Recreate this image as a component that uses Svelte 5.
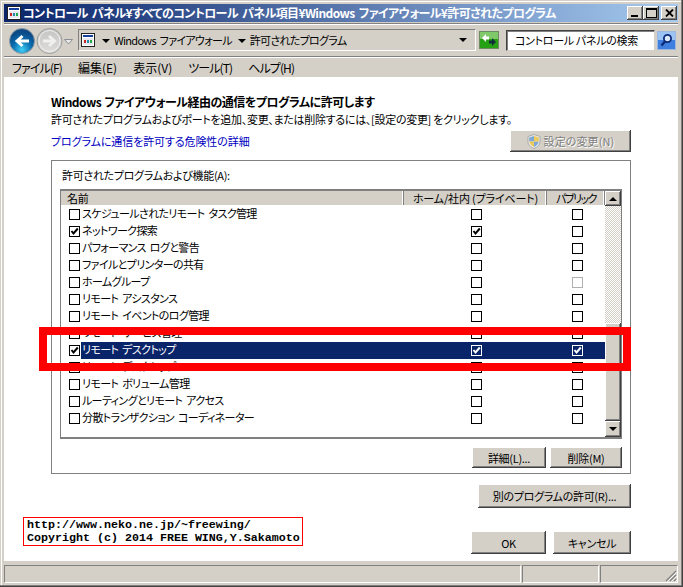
<script>
  const rows = [
    { name: 'スケジュールされたリモート タスク管理', on: false, home: false, pub: false },
    { name: 'ネットワーク探索', on: true, home: true, pub: false },
    { name: 'パフォーマンス ログと警告', on: false, home: false, pub: false },
    { name: 'ファイルとプリンターの共有', on: false, home: false, pub: false },
    { name: 'ホームグループ', on: false, home: false, pub: false, pubOff: true },
    { name: 'リモート アシスタンス', on: false, home: false, pub: false },
    { name: 'リモート イベントのログ管理', on: false, home: false, pub: false },
    { name: 'リモート サービス管理', on: false, home: false, pub: false },
    { name: 'リモート デスクトップ', on: true, home: true, pub: true, selected: true },
    { name: 'リモート デスクトップ - RemoteFX', on: false, home: false, pub: false },
    { name: 'リモート ボリューム管理', on: false, home: false, pub: false },
    { name: 'ルーティングとリモート アクセス', on: false, home: false, pub: false },
    { name: '分散トランザクション コーディネーター', on: false, home: false, pub: false }
  ];
  const menus = [
    { label: 'ファイル(F)', kana: true },
    { label: '編集(E)', kana: false },
    { label: '表示(V)', kana: false },
    { label: 'ツール(T)', kana: true },
    { label: 'ヘルプ(H)', kana: true }
  ];
</script>

{#snippet appIcon()}
  <svg class="app-icon" width="14" height="14" viewBox="0 0 14 14">
    <rect x="0.5" y="0.5" width="13" height="13" fill="#fff" stroke="#222" />
    <rect x="2" y="2" width="10" height="2" fill="#1b3f9c" />
    <rect x="2" y="5" width="10" height="7" fill="#e8e8f0" />
    <rect x="3" y="7" width="2" height="3" fill="#c22" />
    <rect x="6" y="7" width="2" height="3" fill="#28a" />
    <rect x="9" y="7" width="2" height="3" fill="#2a4" />
  </svg>
{/snippet}

{#snippet check(checked, cls)}
  <span class="box {cls}">
    {#if checked}
      <svg width="9" height="9" viewBox="0 0 9 9"><path d="M1.5 4 L3.5 6.5 L7.8 1.5" fill="none" stroke="currentColor" stroke-width="2" /></svg>
    {/if}
  </span>
{/snippet}

<div class="window">
  <div class="titlebar">
    {@render appIcon()}
    <span class="title">コントロール パネル¥すべてのコントロール パネル項目¥Windows ファイアウォール¥許可されたプログラム</span>
    <div class="caption-btns">
      <button class="cap"><span class="min"></span></button>
      <button class="cap"><span class="max"></span></button>
      <button class="cap close">
        <svg width="9" height="8" viewBox="0 0 9 8"><path d="M1 0.5 L8 7.5 M8 0.5 L1 7.5" stroke="#000" stroke-width="1.8" /></svg>
      </button>
    </div>
  </div>

  <div class="toolbar">
    <svg class="nav" width="71" height="28" viewBox="0 0 71 28">
      <defs>
        <radialGradient id="blue" cx="50%" cy="85%" r="70%">
          <stop offset="0" stop-color="#3fd0f5" />
          <stop offset="0.55" stop-color="#0a6cb0" />
          <stop offset="1" stop-color="#0b4a86" />
        </radialGradient>
        <linearGradient id="grey" x1="0" y1="0" x2="0" y2="1">
          <stop offset="0" stop-color="#c4c4c2" />
          <stop offset="1" stop-color="#dedddb" />
        </linearGradient>
      </defs>
      <circle cx="40.5" cy="14" r="12.5" fill="url(#grey)" stroke="#9d9d9b" />
      <circle cx="40.5" cy="14" r="10.5" fill="none" stroke="#efefed" />
      <path d="M34 14 H45 M40 9 L45.5 14 L40 19" fill="none" stroke="#f0f0ee" stroke-width="3" />
      <circle cx="13" cy="14" r="12.5" fill="url(#blue)" stroke="#8e9aa3" />
      <path d="M20 14 H9 M13.5 9 L8 14 L13.5 19" fill="none" stroke="#fff" stroke-width="3" />
      <path d="M55.5 12.5 H63.5 L59.5 17 Z" fill="#e8e8e6" stroke="#8b8f94" />
    </svg>
    <div class="address">
      {@render appIcon()}
      <span class="tri"></span>
      <span class="crumb">Windows ファイアウォール</span>
      <span class="tri"></span>
      <span class="crumb">許可されたプログラム</span>
      <span class="tri drop"></span>
    </div>
    <svg class="refresh" width="20" height="18" viewBox="0 0 20 18">
      <rect x="0.5" y="0.5" width="19" height="17" fill="#26a014" stroke="#6d8a62" />
      <rect x="1" y="1" width="18" height="7" fill="#7fc96a" />
      <path d="M3 7 L7 3 V5.5 H10 V8.5 H7 V11 Z" fill="#fff" />
      <path d="M17 11 L13 15 V12.5 H10 V9.5 H13 V7 Z" fill="#10303a" />
    </svg>
    <div class="search">コントロール パネルの検索</div>
    <svg class="search-btn" width="19" height="19" viewBox="0 0 19 19">
      <rect x="0.5" y="0.5" width="18" height="18" fill="#3f7fe0" stroke="#9db8dc" />
      <rect x="1" y="1" width="17" height="8" fill="#9cc4f3" />
      <circle cx="10.5" cy="7.5" r="3.6" fill="#dceaf8" stroke="#0c2a78" stroke-width="1.8" />
      <path d="M8 10.5 L4.5 14.5" stroke="#0c2a78" stroke-width="2.4" />
    </svg>
  </div>

  <nav class="menubar">
    {#each menus as m}
      <span class:kana={m.kana}>{m.label}</span>
    {/each}
  </nav>

  <main class="content">
    <h1>Windows ファイアウォール経由の通信をプログラムに許可します</h1>
    <p class="desc">許可されたプログラムおよびポートを追加、変更、または削除するには、[設定の変更] をクリックします。</p>
    <div class="link-row">
      <span class="link">プログラムに通信を許可する危険性の詳細</span>
      <button class="btn settings" disabled>
        <svg width="14" height="15" viewBox="0 0 14 15">
          <path d="M7 0.5 L13 2.5 V8 C13 11 10 13.3 7 14.5 C4 13.3 1 11 1 8 V2.5 Z" fill="#eee" stroke="#a9a9a6" />
          <path d="M7 2 V7.5 H2.2 V3.4 Z" fill="#7fa8d8" />
          <path d="M7 7.5 H11.8 C11.5 10 9.4 11.9 7 13 Z" fill="#7fa8d8" />
          <path d="M7 2 L11.8 3.4 V7.5 H7 Z" fill="#eccb5c" />
          <path d="M7 7.5 V13 C4.6 11.9 2.5 10 2.2 7.5 Z" fill="#eccb5c" />
        </svg>
        設定の変更(N)
      </button>
    </div>

    <section class="group">
      <div class="group-label">許可されたプログラムおよび機能(A):</div>
      <div class="list">
        <div class="list-main">
          <div class="head">
            <span class="col-name">名前</span>
            <span class="col-home">ホーム/社内 (プライベート)</span>
            <span class="col-pub">パブリック</span>
          </div>
          {#each rows as r}
            <div class="row">
              <span class="cell-name">
                {@render check(r.on, '')}
                <span class="name" class:sel={r.selected}>{r.name}</span>
              </span>
              <span class="cell-check cell-home" class:sel={r.selected}>{@render check(r.home, r.selected ? 'inv' : '')}</span>
              <span class="cell-check cell-pub" class:sel={r.selected}>{@render check(r.pub, r.selected ? 'inv' : r.pubOff ? 'off' : '')}</span>
            </div>
          {/each}
        </div>
        <div class="scroll">
          <div class="sb-btn first"><span class="up"></span></div>
          <div class="track top"></div>
          <div class="thumb"></div>
          <div class="sb-btn"><span class="down"></span></div>
        </div>
      </div>
      <div class="group-actions">
        <button class="btn details">詳細(L)...</button>
        <button class="btn remove">削除(M)</button>
      </div>
    </section>

    <div class="other-row">
      <button class="btn other">別のプログラムの許可(R)...</button>
    </div>

    <div class="foot">
      <div class="copyright">http://www.neko.ne.jp/~freewing/<br />Copyright (c) 2014 FREE WING,Y.Sakamoto</div>
      <div class="foot-btns">
        <button class="btn ok">OK</button>
        <button class="btn cancel">キャンセル</button>
      </div>
    </div>

    <div class="highlight"></div>
  </main>

  <footer class="status">
    <div class="pane p1"></div>
    <div class="pane p2"></div>
    <div class="pane p3">
      <svg class="grip" width="12" height="12" viewBox="0 0 12 12">
        <path d="M11 1 L1 11 M11 5 L5 11 M11 9 L9 11" stroke="#808080" stroke-width="1.2" />
        <path d="M12 2 L2 12 M12 6 L6 12 M12 10 L10 12" stroke="#fff" stroke-width="0.8" />
      </svg>
    </div>
  </footer>
</div>

<style>
  :global(body) {
    margin: 0;
    background: #d4d0c8;
  }

  .window {
    width: 683px;
    height: 587px;
    box-sizing: border-box;
    padding: 4px 5px 4px 4px;
    background: #d4d0c8;
    display: flex;
    flex-direction: column;
    position: relative;
    box-shadow: inset -1px -1px 0 #404040, inset -2px -2px 0 #808080, inset 1px 1px 0 #d4d0c8, inset 2px 2px 0 #fff;
    font-family: "Noto Sans CJK JP", "Liberation Sans", sans-serif;
    font-size: 11px;
    letter-spacing: -0.3px;
    font-feature-settings: "palt";
    color: #000;
    overflow: hidden;
  }

  .titlebar {
    height: 18px;
    flex-shrink: 0;
    display: flex;
    align-items: center;
    padding-left: 3px;
    gap: 1px;
    background: linear-gradient(90deg, #0a246a, #a6caf0);
    color: #fff;
  }

  .app-icon { flex-shrink: 0; }

  .title {
    font-size: 12px;
    font-weight: 700;
    letter-spacing: -0.6px;
    word-spacing: 2px;
    white-space: nowrap;
    line-height: 18px;
    padding-left: 1px;
    flex: 1;
  }

  .caption-btns {
    display: flex;
    margin-right: 1px;
  }

  .cap {
    width: 16px;
    height: 14px;
    padding: 0;
    border: 0;
    background: #d4d0c8;
    box-shadow: inset -1px -1px 0 #404040, inset 1px 1px 0 #fff, inset -2px -2px 0 #808080;
    display: flex;
    align-items: center;
    justify-content: center;
    position: relative;
  }

  .cap.close { margin-left: 2px; }

  .min {
    width: 7px;
    height: 2px;
    background: #000;
    margin-top: 6px;
    margin-right: 2px;
  }

  .max {
    width: 9px;
    height: 7px;
    border: 1px solid #000;
    border-top-width: 2px;
    box-sizing: content-box;
    margin-top: -1px;
  }

  .toolbar {
    height: 34px;
    flex-shrink: 0;
    margin-top: 1px;
    display: flex;
    align-items: center;
    border-top: 1px solid #808080;
    border-bottom: 1px solid #808080;
    box-shadow: inset 0 1px 0 #fff, 0 1px 0 #fff;
    padding-left: 5px;
    box-sizing: border-box;
  }

  .nav { flex-shrink: 0; margin-top: 2px; }

  .address {
    width: 398px;
    height: 22px;
    box-sizing: border-box;
    margin-left: -2px;
    display: flex;
    align-items: center;
    padding-left: 2px;
    border-top: 1px solid #808080;
    border-left: 1px solid #808080;
    border-bottom: 1px solid #fff;
    border-right: 1px solid #fff;
    position: relative;
    font-size: 11px;
  }

  .tri {
    width: 0;
    height: 0;
    border-left: 4px solid transparent;
    border-right: 4px solid transparent;
    border-top: 4px solid #000;
    margin: 1px 4px 0 6px;
  }

  .tri:first-of-type { margin-left: 7px; }

  .tri.drop {
    position: absolute;
    right: 8px;
    top: 8px;
    margin: 0;
  }

  .crumb {
    white-space: nowrap;
    letter-spacing: -0.7px;
    word-spacing: 2px;
  }

  .refresh { margin-left: 3px; flex-shrink: 0; }

  .search {
    width: 149px;
    height: 21px;
    box-sizing: border-box;
    margin-left: 7px;
    padding-left: 8px;
    background: #fff;
    line-height: 19px;
    border-top: 1px solid #404040;
    border-left: 1px solid #404040;
    border-right: 1px solid #d4d0c8;
    border-bottom: 1px solid #d4d0c8;
    box-shadow: inset 1px 1px 0 #808080;
    white-space: nowrap;
  }

  .search-btn { margin-left: 2px; flex-shrink: 0; }

  .menubar {
    height: 19px;
    flex-shrink: 0;
    margin-top: 1px;
    display: flex;
    align-items: center;
    gap: 16px;
    padding-left: 8px;
    line-height: 19px;
    white-space: nowrap;
    font-size: 12px;
    letter-spacing: 0;
  }

  .kana { letter-spacing: -0.9px; }

  .content {
    flex: 1;
    min-height: 0;
    background: #fff;
    padding: 16px 47px 0;
    position: relative;
    display: flex;
    flex-direction: column;
  }

  h1 {
    margin: 0;
    font-size: 12px;
    font-weight: 700;
    letter-spacing: -0.5px;
    word-spacing: 1px;
    line-height: 18px;
    white-space: nowrap;
  }

  .desc {
    margin: 0;
    line-height: 17px;
    white-space: nowrap;
  }

  .link-row {
    display: flex;
    justify-content: space-between;
    align-items: flex-start;
    margin-top: 2px;
  }

  .link {
    color: #0000c0;
    letter-spacing: -0.1px;
    line-height: 17px;
    margin-top: 3px;
  }

  .btn {
    font: inherit;
    font-feature-settings: inherit;
    letter-spacing: inherit;
    padding: 0;
    border: 0;
    background: #d4d0c8;
    color: #000;
    box-shadow: inset -1px -1px 0 #404040, inset 1px 1px 0 #fff, inset -2px -2px 0 #808080;
    display: flex;
    align-items: center;
    justify-content: center;
    box-sizing: border-box;
    white-space: nowrap;
  }

  .settings {
    width: 121px;
    height: 22px;
    gap: 3px;
    letter-spacing: 0.1px;
    color: #808080;
    text-shadow: 1px 1px 0 #fff;
  }

  .group {
    margin-top: 8px;
    height: 314px;
    box-sizing: border-box;
    border: 1px solid #808080;
    padding: 0 8px;
    display: flex;
    flex-direction: column;
  }

  .group-label {
    height: 28px;
    line-height: 28px;
    padding-left: 2px;
    white-space: nowrap;
  }

  .list {
    height: 250px;
    box-sizing: border-box;
    border: 1px solid #808080;
    border-top-width: 2px;
    border-bottom-width: 2px;
    display: flex;
    flex-shrink: 0;
  }

  .list-main {
    flex: 1;
    min-width: 0;
  }

  .head {
    height: 14px;
    display: grid;
    grid-template-columns: 343px 143px 1fr;
    background: #d4d0c8;
    line-height: 14px;
    border-bottom: 1px solid #fff;
    letter-spacing: -0.15px;
  }

  .head span {
    box-shadow: inset -1px 0 0 #808080, inset -2px 0 0 #fff;
    text-align: center;
    white-space: nowrap;
  }

  .head .col-name {
    text-align: left;
    padding-left: 6px;
  }

  .head .col-pub { letter-spacing: -1.5px; }

  .row {
    height: 17px;
    display: grid;
    grid-template-columns: 343px 143px 1fr;
    line-height: 17px;
  }

  .cell-name {
    display: flex;
    align-items: center;
    padding-left: 8px;
  }

  .name {
    flex: 1;
    margin-left: 1px;
    padding-left: 1px;
    padding-bottom: 2px;
    line-height: 15px;
    letter-spacing: -0.62px;
    word-spacing: 2px;
    white-space: nowrap;
  }

  .sel {
    background: #0a246a;
    color: #fff;
  }

  .cell-check {
    display: flex;
    align-items: center;
    justify-content: center;
  }

  .cell-home { padding-left: 2px; }
  .cell-pub { padding-left: 3px; }

  .box {
    width: 11px;
    height: 11px;
    box-sizing: border-box;
    border: 1px solid #000;
    background: #fff;
    color: #000;
    display: flex;
    align-items: center;
    justify-content: center;
    flex-shrink: 0;
  }

  .box.inv {
    background: #0a246a;
    border-color: #fff;
    color: #fff;
  }

  .box.off { border-color: #b0b0b0; }

  .scroll {
    width: 16px;
    display: flex;
    flex-direction: column;
    flex-shrink: 0;
  }

  .sb-btn {
    height: 16px;
    flex-shrink: 0;
    background: #d4d0c8;
    box-shadow: inset -1px -1px 0 #404040, inset 1px 1px 0 #fff, inset -2px -2px 0 #808080;
    display: flex;
    align-items: center;
    justify-content: center;
  }

  .sb-btn.first { height: 15px; }

  .up, .down {
    width: 0;
    height: 0;
    border-left: 4px solid transparent;
    border-right: 4px solid transparent;
  }

  .up { border-bottom: 4px solid #000; }
  .down { border-top: 4px solid #000; }

  .track {
    height: 117px;
    flex-shrink: 0;
    background: conic-gradient(#fff 25%, #d4d0c8 0 50%, #fff 0 75%, #d4d0c8 0) 0 0 / 2px 2px;
  }

  .thumb {
    flex: 1;
    background: #d4d0c8;
    box-shadow: inset -1px -1px 0 #404040, inset 1px 1px 0 #fff, inset -2px -2px 0 #808080;
  }

  .group-actions {
    display: flex;
    justify-content: flex-end;
    gap: 4px;
    margin-top: 8px;
  }

  .details { width: 74px; height: 21px; }
  .remove { width: 72px; height: 21px; }

  .other-row {
    display: flex;
    justify-content: flex-end;
    margin-top: 10px;
  }

  .other { width: 153px; height: 24px; }

  .foot {
    display: flex;
    justify-content: space-between;
    align-items: flex-start;
    margin-left: -28px;
    margin-top: 9px;
  }

  .copyright {
    width: 280px;
    height: 29px;
    box-sizing: border-box;
    border: 1px solid #f00;
    padding: 1px 0 0 3px;
    font-family: "Liberation Mono", monospace;
    font-feature-settings: normal;
    font-weight: 700;
    font-size: 11.67px;
    letter-spacing: 0;
    line-height: 13px;
    white-space: nowrap;
  }

  .foot-btns {
    display: flex;
    gap: 7px;
    margin-top: 14px;
  }

  .ok { width: 75px; height: 23px; }
  .cancel { width: 78px; height: 23px; }

  .highlight {
    position: absolute;
    left: 35px;
    top: 250px;
    width: 592px;
    height: 44px;
    box-sizing: border-box;
    border: 8px solid #f00;
    pointer-events: none;
  }

  .status {
    height: 18px;
    flex-shrink: 0;
    margin-top: 4px;
    display: flex;
    gap: 1px;
  }

  .pane {
    box-sizing: border-box;
    border-top: 1px solid #808080;
    border-left: 1px solid #808080;
    border-bottom: 1px solid #fff;
    border-right: 1px solid #fff;
    position: relative;
  }

  .p1 { width: 517px; }
  .p2 { width: 77px; }
  .p3 { flex: 1; }

  .grip {
    position: absolute;
    right: 0;
    bottom: 0;
  }
</style>
